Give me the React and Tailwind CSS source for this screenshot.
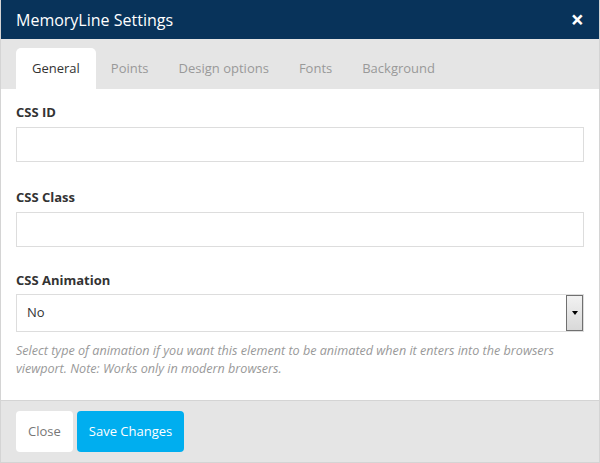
import { useState } from 'react';

const TABS = ["General", "Points", "Design options", "Fonts", "Background"];

function App() {
	const [activeTab, setActiveTab] = useState(0);
	const [animation, setAnimation] = useState("No");

	return (
		<div className="w-[600px] h-[463px] flex flex-col border border-t-0 border-[#d4d4d4] bg-[#e5e5e5] font-['Open_Sans',sans-serif] text-[#333]">
			{/* Header */}
			<div className="h-[39px] shrink-0 bg-[#08335a] flex items-center justify-between pl-[15px] pr-[15px]">
				<h1 className="text-[16px] text-white leading-none">MemoryLine Settings</h1>
				<button className="text-white text-[23px] font-bold leading-none">×</button>
			</div>

			{/* Tabs */}
			<div className="h-[50px] shrink-0 flex items-end pl-[15px]">
				{TABS.map((tab, index) => (
					<button
						key={tab}
						onClick={() => setActiveTab(index)}
						className={`h-[41px] text-[13px] rounded-t-[5px] ${index === 0 ? 'px-[16px]' : 'px-[15px]'} ${activeTab === index ? 'bg-white text-[#333]' : 'text-[#999]'}`}
					>
						{tab}
					</button>
				))}
			</div>

			{/* Body */}
			<div className="h-[312px] shrink-0 bg-white px-[15px] pt-[15px] border-b border-[#d4d4d4]">
				<div className="mb-[27px]">
					<label className="block text-[13px] font-bold mb-[6px] leading-[17px]">CSS ID</label>
					<input type="text" className="w-full h-[35px] border border-[#ddd] px-[10px] text-[13px] outline-none" />
				</div>
				<div className="mb-[25px]">
					<label className="block text-[13px] font-bold mb-[6px] leading-[17px]">CSS Class</label>
					<input type="text" className="w-full h-[35px] border border-[#ddd] px-[10px] text-[13px] outline-none" />
				</div>
				<div>
					<label className="block text-[13px] font-bold mb-[5px] leading-[17px]">CSS Animation</label>
					<div className="relative h-[38px] border border-[#ddd] flex items-center">
						<select
							value={animation}
							onChange={(e) => setAnimation(e.target.value)}
							className="appearance-none w-full h-full pl-[10px] text-[13px] bg-transparent outline-none"
						>
							<option>No</option>
							<option>Fade in</option>
						</select>
						{/* dropdown arrow box */}
						<div className="absolute right-0 top-0 h-full w-[17px] border border-[#707070] bg-gradient-to-b from-[#f2f2f2] to-[#d9d9d9] flex items-center justify-center pointer-events-none">
							<div className="w-0 h-0 border-l-[3.5px] border-r-[3.5px] border-t-[4px] border-l-transparent border-r-transparent border-t-black"></div>
						</div>
					</div>
					<p className="mt-[10px] text-[12.6px] italic text-[#999] leading-[18px]">
						Select type of animation if you want this element to be animated when it enters into the browsers viewport. Note: Works only in modern browsers.
					</p>
				</div>
			</div>

			{/* Footer */}
			<div className="flex-1 flex items-start gap-[4px] pl-[15px] pt-[10px]">
				<button className="h-[41px] px-[12px] bg-white rounded-[4px] text-[13px] text-[#777]">Close</button>
				<button className="h-[41px] px-[12px] bg-[#00aeef] rounded-[4px] text-[13px] text-white">Save Changes</button>
			</div>
		</div>
	);
}

export default App;
